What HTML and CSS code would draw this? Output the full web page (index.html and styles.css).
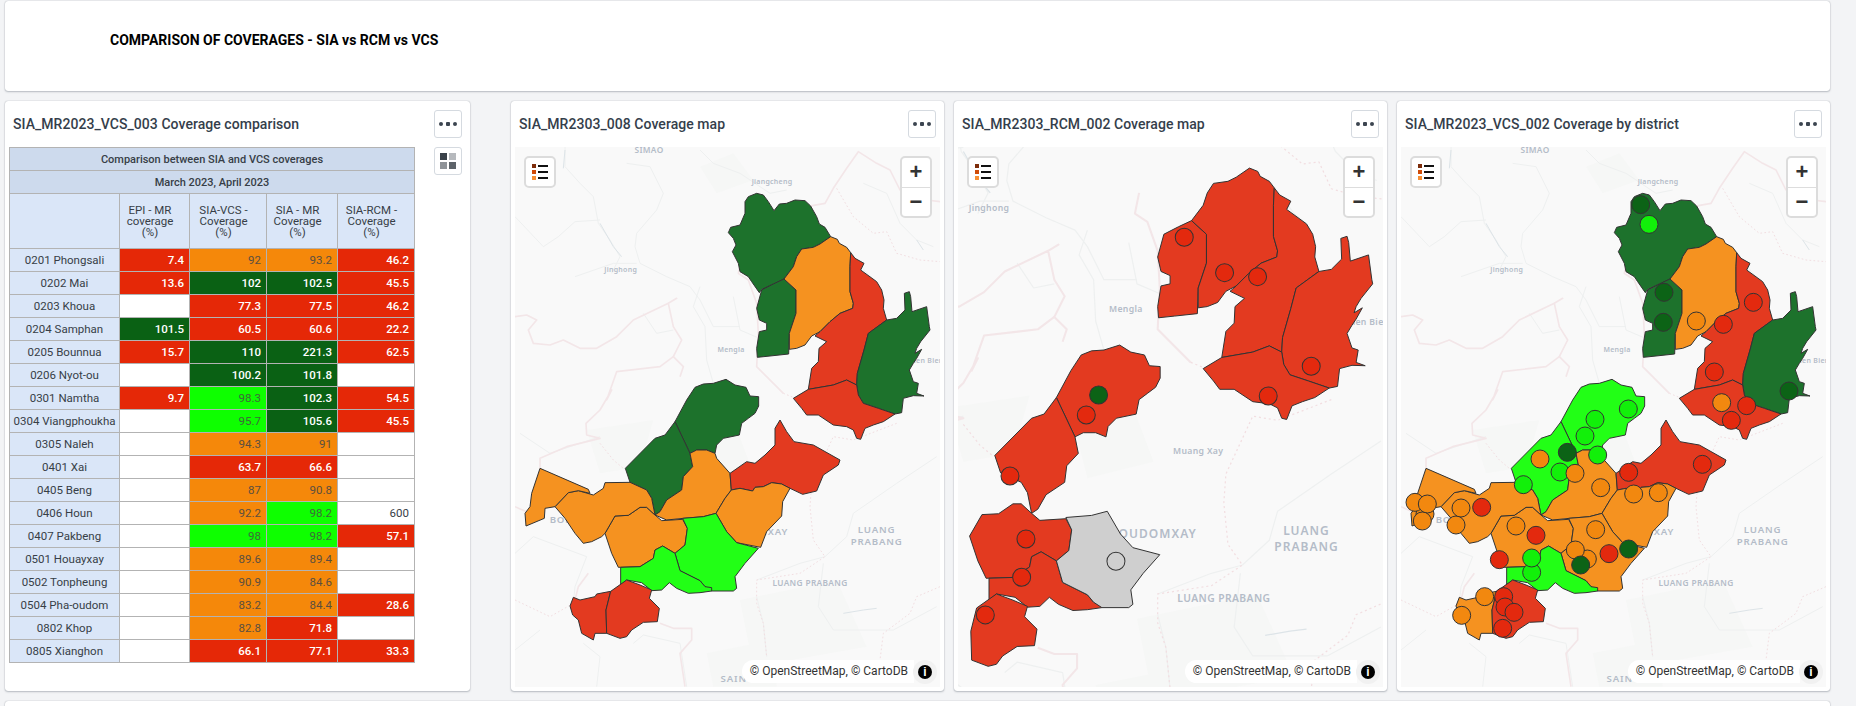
FILE: index.html
```html
<!DOCTYPE html>
<html lang="en">
<head>
  <meta charset="UTF-8">
  <title>Comparison of coverages</title>
  <link rel="stylesheet" href="styles.css">
</head>
<body>
  <!-- shared map geometry, coordinates are 3x map pixels -->
  <svg class="defs" aria-hidden="true">
    <defs>
      <g id="base">
        <rect x="0" y="0" width="1400" height="1800" fill="#f9f9f9"/>
        <path class="patch" d="M600 200L700 160L760 240L650 280ZM560 1000L700 960L760 1120L600 1160ZM720 1500L1010 1440L1100 1640L760 1700ZM620 1660L820 1620L830 1760L640 1760ZM260 990L460 960L420 1100L300 1120Z"/>
        <path class="road" d="M195 141L195 200L240 250L280 290L295 370L330 420L360 470L335 520"/>
        <path class="road" d="M380 190L450 200L490 280L470 330L410 400L405 440L420 490L500 530L570 560L600 600L640 680L720 680"/>
        <path class="road" d="M45 350L130 440L175 410L225 365L300 360"/>
        <path class="road" d="M225 530L340 490L410 490M600 560L580 620L615 680L620 780L640 850"/>
        <path class="road" d="M1090 250L1160 280L1200 370L1250 420L1300 440M1310 1070L1190 1150L1060 1240L1040 1310L975 1370L900 1390L770 1440"/>
        <path class="road" d="M970 1390L955 1520L1000 1590L1180 1590L1310 1520M770 1490L790 1570L800 1670M45 1360L100 1310L260 1370L225 1460L220 1510"/>
        <path class="road" d="M400 1630L430 1605L540 1630L560 1760M250 1630L300 1670L290 1760M45 1650L120 1590M60 1000L150 1060L300 1010"/>
        <path class="road" d="M600 150L640 190L720 220L810 280L860 270M430 640L470 700L520 690M1040 440L1100 520L1130 545M700 590L720 690L790 720"/>
        <path class="river" d="M195 150L190 205M300 370L340 440L365 470M1030 1540L1090 1530L1130 1525M1250 420L1270 450"/>
        <path class="pink" d="M920 320L975 310L1000 265L1040 205L1075 155L1130 190L1170 210L1200 270L1280 300L1320 305"/>
        <path class="pink" d="M45 650L80 645L110 660L85 690L100 730L150 735L190 720L240 745L290 745L350 710L400 660L505 610L530 595L505 610L520 680L545 720L520 770L550 800L540 830"/>
        <path class="pink" d="M520 770L480 800L350 815L320 900L335 870L300 930L258 970L260 1005L300 1015L200 1040L120 1075L120 1105M45 1220L90 1240"/>
        <path class="pink" d="M725 470L715 520L745 540L770 610L775 700L770 800L800 830L850 880"/>
        <path class="pink" d="M480 1570L520 1585L575 1585L575 1620L540 1660L555 1760M265 1420L235 1460L225 1500"/>
        <path class="dots" d="M1010 265L1060 350L1120 400L1160 395L1190 460L1260 480L1320 485"/>
        <path class="dots" d="M1190 970L1060 1020L1000 1010L935 1150L930 1220L940 1320L975 1370L900 1420L770 1440L770 1510L790 1570L800 1670M850 880L900 900L940 930"/>
        <path class="dots" d="M1320 1460L1250 1490L1230 1540L1150 1600L1140 1680M300 1030L340 1080L370 1105M45 1500L150 1550L220 1510"/>
        <text class="lab" x="447" y="160">SIMAO</text>
        <text class="lab sm" x="816" y="251">Jiangcheng</text>
        <text class="lab sm" x="362" y="515">Jinghong</text>
        <text class="lab sm" x="693" y="757">Mengla</text>
        <text class="lab sm" x="1278" y="790">Dien Bien</text>
        <text class="lab big" x="988" y="662">PHONGSALY</text>
        <text class="lab big" x="615" y="970">LUANG</text>
        <text class="lab big" x="615" y="1005">NAMTHA</text>
        <text class="lab sm" x="868" y="1102">Muang Xay</text>
        <text class="lab big" x="205" y="1270">BOKEO</text>
        <text class="lab big" x="770" y="1305">OUDOMXAY</text>
        <text class="lab big" x="1130" y="1298">LUANG</text>
        <text class="lab big" x="1130" y="1335">PRABANG</text>
        <text class="lab" x="930" y="1459">LUANG PRABANG</text>
        <text class="lab big" x="760" y="1745">SAINYABULI</text>
      </g>
      <path id="d1" class="dist" d="M735 305L745 290L770 280L790 285L805 305L822 332L838 312L860 310L885 300L915 302L932 318L950 350L958 372L975 382L992 410L960 432L940 442L905 447L890 470L880 500L852 537L820 552L785 568L778 578L755 545L745 530L720 515L715 490L697 455L708 435L700 415L685 398L692 382L720 375L735 340Z"/>
      <path id="d2" class="dist" d="M852 537L888 570L888 640L868 700L866 762L810 768L772 772L770 745L778 695L800 690L800 670L778 660L770 625L785 570L820 552Z"/>
      <path id="d3" class="dist" d="M992 410L1012 418L1018 430L1040 442L1052 458L1050 500L1050 575L1060 610L1058 625L1020 640L990 665L960 695L935 708L915 735L890 745L868 748L868 700L888 640L888 570L852 537L880 500L890 470L905 447L940 442L960 432Z"/>
      <path id="d4" class="dist" d="M1052 458L1065 475L1092 490L1082 510L1130 545L1145 570L1152 600L1150 625L1160 660L1105 700L1092 750L1072 820L1070 855L1040 840L1000 855L925 868L935 805L955 785L957 745L980 725L945 708L960 695L990 665L1020 640L1058 625L1060 610L1050 575L1050 500Z"/>
      <path id="d5" class="dist" d="M1160 660L1190 655L1215 630L1213 580L1228 575L1232 590L1236 635L1280 620L1288 680L1290 690L1262 725L1250 745L1245 760L1265 748L1250 775L1240 790L1228 810L1240 845L1255 850L1250 880L1272 888L1240 887L1210 895L1205 938L1185 942L1135 925L1090 910L1075 885L1070 855L1072 820L1092 750L1105 700Z"/>
      <path id="d6" class="dist" d="M880 895L925 868L1000 855L1040 840L1070 855L1075 885L1090 910L1135 925L1185 942L1150 965L1120 975L1095 985L1082 1018L1070 1015L1060 990L1040 980L1000 975L955 945L920 945L905 925Z"/>
      <path id="d7" class="dist" d="M560 900L585 862L610 852L640 850L678 838L705 855L738 862L750 888L776 890L776 918L765 940L745 955L725 970L718 1005L670 1015L650 1035L645 1060L620 1050L590 1050L570 1060L525 965Z"/>
      <path id="d8" class="dist" d="M525 965L570 1060L578 1100L550 1130L545 1170L500 1200L480 1235L465 1245L455 1195L440 1170L390 1147L376 1105L465 1015L495 1005Z"/>
      <path id="d9" class="dist" d="M570 1060L590 1050L620 1050L645 1060L650 1075L690 1120L694 1170L675 1195L648 1240L610 1250L550 1255L500 1260L465 1245L480 1235L500 1200L545 1170L550 1130L578 1100Z"/>
      <path id="d10" class="dist" d="M690 1120L740 1085L765 1090L795 1065L825 1035L825 985L840 960L860 995L882 1025L940 1035L1020 1080L1015 1095L970 1125L950 1173L908 1183L870 1165L845 1152L815 1148L790 1160L765 1162L758 1173L720 1165L694 1170Z"/>
      <path id="d11" class="dist" d="M694 1170L720 1165L758 1173L765 1162L790 1160L815 1148L845 1152L870 1165L848 1205L845 1248L800 1295L782 1342L710 1328L680 1295L648 1240L675 1195Z"/>
      <path id="d12" class="dist" d="M648 1240L680 1295L710 1328L775 1345L735 1390L705 1430L710 1465L700 1473L635 1473L615 1460L600 1442L540 1412L525 1360L555 1335L562 1285L548 1255L610 1250Z"/>
      <path id="d13" class="dist" d="M362 1402L420 1400L460 1375L465 1350L488 1338L525 1360L540 1412L600 1442L615 1460L635 1463L635 1473L600 1478L565 1480L530 1465L508 1448L485 1470L455 1472L425 1448L380 1440L362 1455Z"/>
      <path id="d14" class="dist" d="M465 1245L485 1262L548 1258L562 1285L555 1335L525 1360L488 1338L465 1350L460 1375L420 1400L355 1402L335 1360L315 1300L345 1248L385 1246L420 1222L440 1222Z"/>
      <path id="d15" class="dist" d="M165 1220L205 1178L235 1172L280 1185L310 1165L315 1148L390 1147L440 1170L455 1195L465 1245L440 1222L420 1222L385 1246L345 1248L315 1300L305 1310L275 1325L250 1330L225 1300L195 1255Z"/>
      <path id="d16" class="dist" d="M120 1105L265 1168L270 1180L235 1172L205 1178L165 1220L135 1225L133 1255L78 1278L75 1240L90 1220L95 1180Z"/>
      <path id="d17" class="dist" d="M220 1492L240 1500L285 1490L290 1482L332 1474L318 1530L320 1600L285 1600L280 1620L245 1600L235 1560L218 1545L210 1518Z"/>
      <path id="d18" class="dist" d="M332 1474L380 1440L420 1455L455 1470L448 1495L478 1525L472 1565L430 1567L395 1590L380 1610L360 1615L320 1600L318 1530Z"/>
      <g id="legend-icon">
        <rect x="0" y="0" width="4" height="4" fill="#7d2c0a"/>
        <rect x="0" y="6" width="4" height="4" fill="#d04b08"/>
        <rect x="0" y="12" width="4" height="4" fill="#f78f33"/>
        <rect x="6" y="1" width="10" height="2" fill="#111"/>
        <rect x="6" y="7" width="10" height="2" fill="#111"/>
        <rect x="6" y="13" width="10" height="2" fill="#111"/>
      </g>
    </defs>
  </svg>

  <section class="card title-card">
    <p class="report-title">COMPARISON OF COVERAGES - SIA vs RCM vs VCS</p>
  </section>

  <main class="row">
    <section class="card table-card">
      <header class="card-head">
        <h3>SIA_MR2023_VCS_003 Coverage comparison</h3>
        <button class="icon-btn"><span class="dots-ic"></span></button>
      </header>
      <div class="table-wrap">
        <table class="pivot">
          <colgroup>
            <col class="c-name"><col class="c-a"><col class="c-b"><col class="c-c"><col class="c-d">
          </colgroup>
          <thead>
            <tr class="t-title"><th colspan="5">Comparison between SIA and VCS coverages</th></tr>
            <tr class="t-title"><th colspan="5">March 2023, April 2023</th></tr>
            <tr class="t-cols">
              <th></th>
              <th><div class="sortable"><span>EPI - MR coverage (%)</span><i class="sort"></i></div></th>
              <th><div class="sortable"><span>SIA-VCS - Coverage (%)</span><i class="sort"></i></div></th>
              <th><div class="sortable"><span>SIA - MR Coverage (%)</span><i class="sort"></i></div></th>
              <th><div class="sortable"><span>SIA-RCM - Coverage (%)</span><i class="sort"></i></div></th>
            </tr>
          </thead>
          <tbody>
            <tr><th>0201 Phongsali</th><td class="r">7.4</td><td class="o">92</td><td class="o">93.2</td><td class="r">46.2</td></tr>
            <tr><th>0202 Mai</th><td class="r">13.6</td><td class="g">102</td><td class="g">102.5</td><td class="r">45.5</td></tr>
            <tr><th>0203 Khoua</th><td></td><td class="r">77.3</td><td class="r">77.5</td><td class="r">46.2</td></tr>
            <tr><th>0204 Samphan</th><td class="g">101.5</td><td class="r">60.5</td><td class="r">60.6</td><td class="r">22.2</td></tr>
            <tr><th>0205 Bounnua</th><td class="r">15.7</td><td class="g">110</td><td class="g">221.3</td><td class="r">62.5</td></tr>
            <tr><th>0206 Nyot-ou</th><td></td><td class="g">100.2</td><td class="g">101.8</td><td></td></tr>
            <tr><th>0301 Namtha</th><td class="r">9.7</td><td class="l">98.3</td><td class="g">102.3</td><td class="r">54.5</td></tr>
            <tr><th>0304 Viangphoukha</th><td></td><td class="l">95.7</td><td class="g">105.6</td><td class="r">45.5</td></tr>
            <tr><th>0305 Naleh</th><td></td><td class="o">94.3</td><td class="o">91</td><td></td></tr>
            <tr><th>0401 Xai</th><td></td><td class="r">63.7</td><td class="r">66.6</td><td></td></tr>
            <tr><th>0405 Beng</th><td></td><td class="o">87</td><td class="o">90.8</td><td></td></tr>
            <tr><th>0406 Houn</th><td></td><td class="o">92.2</td><td class="l">98.2</td><td>600</td></tr>
            <tr><th>0407 Pakbeng</th><td></td><td class="l">98</td><td class="l">98.2</td><td class="r">57.1</td></tr>
            <tr><th>0501 Houayxay</th><td></td><td class="o">89.6</td><td class="o">89.4</td><td></td></tr>
            <tr><th>0502 Tonpheung</th><td></td><td class="o">90.9</td><td class="o">84.6</td><td></td></tr>
            <tr><th>0504 Pha-oudom</th><td></td><td class="o">83.2</td><td class="o">84.4</td><td class="r">28.6</td></tr>
            <tr><th>0802 Khop</th><td></td><td class="o">82.8</td><td class="r">71.8</td><td></td></tr>
            <tr><th>0805 Xianghon</th><td></td><td class="r">66.1</td><td class="r">77.1</td><td class="r">33.3</td></tr>
          </tbody>
        </table>
        <button class="icon-btn">
          <svg width="16" height="16" viewBox="0 0 16 16">
            <rect width="7" height="7" fill="#3a4149"/><rect x="9" width="7" height="7" fill="#b6b9bd"/>
            <rect y="9" width="7" height="7" fill="#8f9398"/><rect x="9" y="9" width="7" height="7" fill="#5d6369"/>
          </svg>
        </button>
      </div>
    </section>

    <div class="maps">
      <section class="card map-card">
        <header class="card-head">
          <h3>SIA_MR2303_008 Coverage map</h3>
          <button class="icon-btn"><span class="dots-ic"></span></button>
        </header>
        <div class="map">
          <svg class="map-svg" viewBox="45 141 1275 1620" preserveAspectRatio="none">
            <use href="#base"/>
            <use href="#d1" class="f-g"/><use href="#d2" class="f-g"/><use href="#d3" class="f-o"/><use href="#d4" class="f-r"/>
            <use href="#d5" class="f-g"/><use href="#d6" class="f-r"/><use href="#d7" class="f-g"/><use href="#d8" class="f-g"/>
            <use href="#d9" class="f-o"/><use href="#d10" class="f-r"/><use href="#d11" class="f-o"/><use href="#d14" class="f-o"/>
            <use href="#d15" class="f-o"/><use href="#d16" class="f-o"/><use href="#d12" class="f-l"/><use href="#d13" class="f-l"/>
            <use href="#d17" class="f-r"/><use href="#d18" class="f-r"/>
          </svg>
          <button class="legend-btn"><svg width="16" height="16"><use href="#legend-icon"/></svg></button>
          <div class="zoom-ctl"><span>+</span><span>−</span></div>
          <div class="attrib">© OpenStreetMap, © CartoDB</div>
          <div class="info"><b>i</b></div>
        </div>
      </section>

      <section class="card map-card">
        <header class="card-head">
          <h3>SIA_MR2303_RCM_002 Coverage map</h3>
          <button class="icon-btn"><span class="dots-ic"></span></button>
        </header>
        <div class="map">
          <svg class="map-svg" viewBox="287 359 1028 1306" preserveAspectRatio="none">
            <use href="#base"/>
            <use href="#d2" class="f-r"/><use href="#d3" class="f-r"/><use href="#d4" class="f-r"/><use href="#d5" class="f-r"/>
            <use href="#d6" class="f-r"/><use href="#d7" class="f-r"/><use href="#d8" class="f-r"/><use href="#d14" class="f-r"/>
            <use href="#d13" class="f-r"/><use href="#d12" class="f-n"/><use href="#d18" class="f-r"/>
            <g transform="translate(267.65 245.35) scale(.806)">
              <circle class="pt p-r" cx="703" cy="412" r="27"/><circle class="pt p-r" cx="824" cy="518" r="27"/>
              <circle class="pt p-r" cx="923" cy="530" r="27"/><circle class="pt p-r" cx="1084" cy="799" r="27"/>
              <circle class="pt p-r" cx="955" cy="888" r="27"/><circle class="pt p-g" cx="446" cy="885" r="27"/>
              <circle class="pt p-r" cx="409" cy="945" r="27"/><circle class="pt p-r" cx="180" cy="1128" r="27"/>
              <circle class="pt p-r" cx="228" cy="1317" r="27"/><circle class="pt p-r" cx="215" cy="1432" r="27"/>
              <circle class="pt p-r" cx="106" cy="1545" r="27"/><circle class="pt p-n" cx="498" cy="1384" r="27"/>
            </g>
          </svg>
          <button class="legend-btn"><svg width="16" height="16"><use href="#legend-icon"/></svg></button>
          <div class="zoom-ctl"><span>+</span><span>−</span></div>
          <div class="attrib">© OpenStreetMap, © CartoDB</div>
          <div class="info"><b>i</b></div>
        </div>
      </section>

      <section class="card map-card">
        <header class="card-head">
          <h3>SIA_MR2023_VCS_002 Coverage by district</h3>
          <button class="icon-btn"><span class="dots-ic"></span></button>
        </header>
        <div class="map">
          <svg class="map-svg" viewBox="45 141 1275 1620" preserveAspectRatio="none">
            <use href="#base"/>
            <use href="#d1" class="f-g"/><use href="#d2" class="f-g"/><use href="#d3" class="f-o"/><use href="#d4" class="f-r"/>
            <use href="#d5" class="f-g"/><use href="#d6" class="f-r"/><use href="#d7" class="f-l"/><use href="#d8" class="f-l"/>
            <use href="#d9" class="f-o"/><use href="#d10" class="f-r"/><use href="#d11" class="f-o"/><use href="#d14" class="f-o"/>
            <use href="#d15" class="f-o"/><use href="#d16" class="f-o"/><use href="#d12" class="f-o"/><use href="#d13" class="f-l"/>
            <use href="#d17" class="f-o"/><use href="#d18" class="f-r"/>
            <g transform="translate(12 0)">
              <circle class="pt p-l" cx="715" cy="927" r="27"/><circle class="pt p-l" cx="615" cy="958" r="27"/>
              <circle class="pt p-l" cx="585" cy="1008" r="27"/><circle class="pt p-l" cx="623" cy="1065" r="27"/>
              <circle class="pt p-g" cx="532" cy="1057" r="27"/><circle class="pt p-o" cx="450" cy="1077" r="27"/>
              <circle class="pt p-l" cx="510" cy="1116" r="27"/><circle class="pt p-o" cx="555" cy="1120" r="27"/>
              <circle class="pt p-l" cx="400" cy="1154" r="27"/>
              <circle class="pt p-g" cx="752" cy="314" r="27"/><circle class="pt p-l" cx="777" cy="373" r="27"/>
              <circle class="pt p-g" cx="822" cy="577" r="27"/><circle class="pt p-g" cx="820" cy="667" r="27"/>
              <circle class="pt p-o" cx="919" cy="663" r="27"/><circle class="pt p-r" cx="1000" cy="673" r="27"/>
              <circle class="pt p-r" cx="1090" cy="607" r="27"/><circle class="pt p-r" cx="973" cy="816" r="27"/>
              <circle class="pt p-g" cx="1197" cy="873" r="27"/><circle class="pt p-o" cx="995" cy="908" r="27"/>
              <circle class="pt p-r" cx="1070" cy="917" r="27"/><circle class="pt p-r" cx="1024" cy="961" r="27"/>
              <circle class="pt p-r" cx="937" cy="1093" r="27"/><circle class="pt p-r" cx="716" cy="1117" r="27"/>
              <circle class="pt p-o" cx="632" cy="1163" r="27"/><circle class="pt p-o" cx="731" cy="1182" r="27"/>
              <circle class="pt p-o" cx="805" cy="1178" r="27"/>
              <circle class="pt p-o" cx="105" cy="1242" r="27"/><circle class="pt p-o" cx="75" cy="1207" r="27"/>
              <circle class="pt p-o" cx="112" cy="1212" r="27"/><circle class="pt p-o" cx="97" cy="1263" r="27"/>
              <circle class="pt p-o" cx="198" cy="1275" r="27"/><circle class="pt p-o" cx="213" cy="1224" r="27"/>
              <circle class="pt p-r" cx="275" cy="1222" r="27"/><circle class="pt p-o" cx="378" cy="1278" r="27"/>
              <circle class="pt p-r" cx="438" cy="1306" r="27"/><circle class="pt p-r" cx="328" cy="1379" r="27"/>
              <circle class="pt p-l" cx="425" cy="1417" r="27"/><circle class="pt p-l" cx="425" cy="1374" r="27"/>
              <circle class="pt p-o" cx="617" cy="1289" r="27"/><circle class="pt p-o" cx="592" cy="1377" r="27"/>
              <circle class="pt p-o" cx="556" cy="1350" r="27"/><circle class="pt p-g" cx="572" cy="1395" r="27"/>
              <circle class="pt p-r" cx="657" cy="1361" r="27"/><circle class="pt p-g" cx="716" cy="1347" r="27"/>
              <circle class="pt p-o" cx="284" cy="1490" r="27"/><circle class="pt p-o" cx="215" cy="1546" r="27"/>
              <circle class="pt p-r" cx="341" cy="1490" r="27"/><circle class="pt p-r" cx="345" cy="1521" r="27"/>
              <circle class="pt p-r" cx="372" cy="1537" r="27"/><circle class="pt p-r" cx="338" cy="1585" r="27"/>
            </g>
          </svg>
          <button class="legend-btn"><svg width="16" height="16"><use href="#legend-icon"/></svg></button>
          <div class="zoom-ctl"><span>+</span><span>−</span></div>
          <div class="attrib">© OpenStreetMap, © CartoDB</div>
          <div class="info"><b>i</b></div>
        </div>
      </section>
    </div>
  </main>

  <section class="card next-card"></section>
</body>
</html>
```

FILE: styles.css
```css
* {
  margin: 0;
  padding: 0;
  box-sizing: border-box;
}
html, body {
  height: 706px;
  overflow: hidden;
}
body {
  background: #f3f4f6;
  font-family: Roboto, "Liberation Sans", sans-serif;
  color: #373e47;
  padding: 1px 26px 0 5px;
}
.defs {
  display: block;
  width: 0;
  height: 0;
}
.card {
  background: #fff;
  border-radius: 3px;
  box-shadow: 0 0 1px rgba(64, 75, 90, .5), 0 1px 2px rgba(64, 75, 90, .3);
}
.title-card {
  height: 90px;
  padding: 31px 0 0 105px;
}
.report-title {
  font-size: 14px;
  font-weight: 700;
  color: #000;
  line-height: 16px;
}
.row {
  display: flex;
  margin-top: 10px;
  height: 590px;
  gap: 41px;
}
.maps {
  display: flex;
  flex: 1;
  gap: 10px;
}
.table-card {
  width: 465px;
}
.map-card {
  flex: 1;
}
.card-head {
  height: 46px;
  display: flex;
  align-items: center;
  justify-content: space-between;
  padding: 0 8px 0 8px;
}
.card-head h3 {
  font-size: 14px;
  font-weight: 500;
  letter-spacing: .05px;
  color: #343e4b;
  white-space: nowrap;
}
.icon-btn {
  width: 28px;
  height: 28px;
  flex: none;
  background: #fff;
  border: 1px solid #d5dae0;
  border-radius: 3px;
  display: flex;
  align-items: center;
  justify-content: center;
}
.dots-ic {
  display: flex;
  justify-content: space-between;
  width: 18px;
  height: 4px;
  background: radial-gradient(circle, #3c4550 2px, transparent 2.5px) center / 4px 4px no-repeat;
}
.dots-ic::before, .dots-ic::after {
  content: "";
  width: 4px;
  height: 4px;
  border-radius: 50%;
  background: #3c4550;
}
.table-wrap {
  display: flex;
  gap: 19px;
  padding-left: 4px;
}
.pivot {
  width: 405px;
  border-collapse: collapse;
  table-layout: fixed;
  font-size: 12px;
  border: 1px solid #adb2b8;
}
.c-name { width: 110px; }
.c-a { width: 70px; }
.c-b { width: 77px; }
.c-c { width: 71px; }
.c-d { width: 77px; }
.pivot th, .pivot td {
  height: 23px;
  border: 1px solid #b3b3b3;
  font-weight: 400;
  line-height: 13px;
}
.pivot tbody th {
  background: #dae6f8;
  text-align: center;
  white-space: nowrap;
  font-size: 11.5px;
}
.pivot td {
  text-align: right;
  padding-right: 5px;
  background: #fff;
  font-size: 11.5px;
}
.t-title th {
  background: #cddaed;
  font-size: 11px;
  font-weight: 500;
  text-align: center;
}
.pivot .t-cols th {
  height: 55px;
  background: #dae6f8;
}
.sortable {
  display: flex;
  align-items: center;
  padding: 0 5px;
  font-size: 11.5px;
  line-height: 11px;
  text-align: center;
  gap: 2px;
}
.sortable span {
  flex: 1;
}
.sort {
  flex: none;
  width: 7px;
  height: 11px;
  background:
    conic-gradient(from -30deg at 50% 0, #a3abb5 60deg, transparent 0) 0 0 / 7px 5px no-repeat,
    conic-gradient(from 150deg at 50% 100%, #a3abb5 60deg, transparent 0) 0 6px / 7px 5px no-repeat;
}
.pivot td.r { background: #e52807; color: #fff; font-weight: 500; }
.pivot td.g { background: #0a6114; color: #fff; font-weight: 500; }
.pivot td.o { background: #f5880a; color: #5a4f40; }
.pivot td.l { background: #0eff00; color: #3f6a3a; }
.map {
  position: relative;
  height: 540px;
  margin: 0 4px;
  overflow: hidden;
  background: #f9f9f9;
}
.map-svg {
  display: block;
  width: 100%;
  height: 100%;
}
.legend-btn {
  position: absolute;
  left: 9px;
  top: 9px;
  width: 32px;
  height: 32px;
  background: #fff;
  border: 2px solid #dcdcdc;
  border-radius: 5px;
  display: flex;
  align-items: center;
  justify-content: center;
}
.zoom-ctl {
  position: absolute;
  right: 8px;
  top: 9px;
  width: 32px;
  border: 2px solid #dcdcdc;
  border-radius: 5px;
  background: #fff;
}
.zoom-ctl span {
  display: block;
  height: 29px;
  text-align: center;
  font: 700 22px/28px "Liberation Sans", sans-serif;
  color: #333;
}
.zoom-ctl span + span {
  border-top: 1px solid #ddd;
}
.attrib {
  position: absolute;
  right: 26px;
  bottom: 4px;
  height: 23px;
  padding: 0 6px 0 8px;
  border-radius: 12px 0 0 12px;
  background: #fff;
  font-size: 12px;
  line-height: 23px;
  color: #333;
  white-space: nowrap;
}
.info {
  position: absolute;
  right: 3px;
  bottom: 3px;
  width: 24px;
  height: 24px;
  border-radius: 50%;
  background: #f1f1f1;
  display: flex;
  align-items: center;
  justify-content: center;
}
.info b {
  width: 14px;
  height: 14px;
  border-radius: 50%;
  background: #000;
  color: #fff;
  font: 700 12px/14px "Liberation Sans", sans-serif;
  text-align: center;
}
.next-card {
  height: 40px;
  margin-top: 10px;
}
.dist {
  stroke: #333;
  stroke-width: 1px;
  vector-effect: non-scaling-stroke;
  stroke-linejoin: round;
}
.f-r { fill: #e33a20; }
.f-o { fill: #f59220; }
.f-g { fill: #1d722c; }
.f-l { fill: #22ff16; }
.f-n { fill: #cfcfcf; }
.pt {
  stroke: #333;
  stroke-width: 1px;
  vector-effect: non-scaling-stroke;
}
.p-r { fill: #e3290e; }
.p-o { fill: #f2880f; }
.p-g { fill: #0c6316; }
.p-l { fill: #12f00a; }
.p-n { fill: #cfcfcf; }
.road, .river, .pink, .dots {
  fill: none;
  stroke-linejoin: round;
}
.patch { fill: #f6f7f6; }
.road { stroke: #eef0f0; stroke-width: 3; }
.river { stroke: #dde4e8; stroke-width: 3; }
.pink { stroke: #f3e6e8; stroke-width: 5; }
.dots { stroke: #f2dee1; stroke-width: 3; stroke-dasharray: 5 7; }
.lab {
  fill: #b4bcc8;
  font: 600 25px "Noto Sans", sans-serif;
  letter-spacing: 1px;
  text-anchor: middle;
}
.lab.sm { font-size: 21px; letter-spacing: .8px; }
.lab.big { font-size: 29px; letter-spacing: 2.5px; }
```
